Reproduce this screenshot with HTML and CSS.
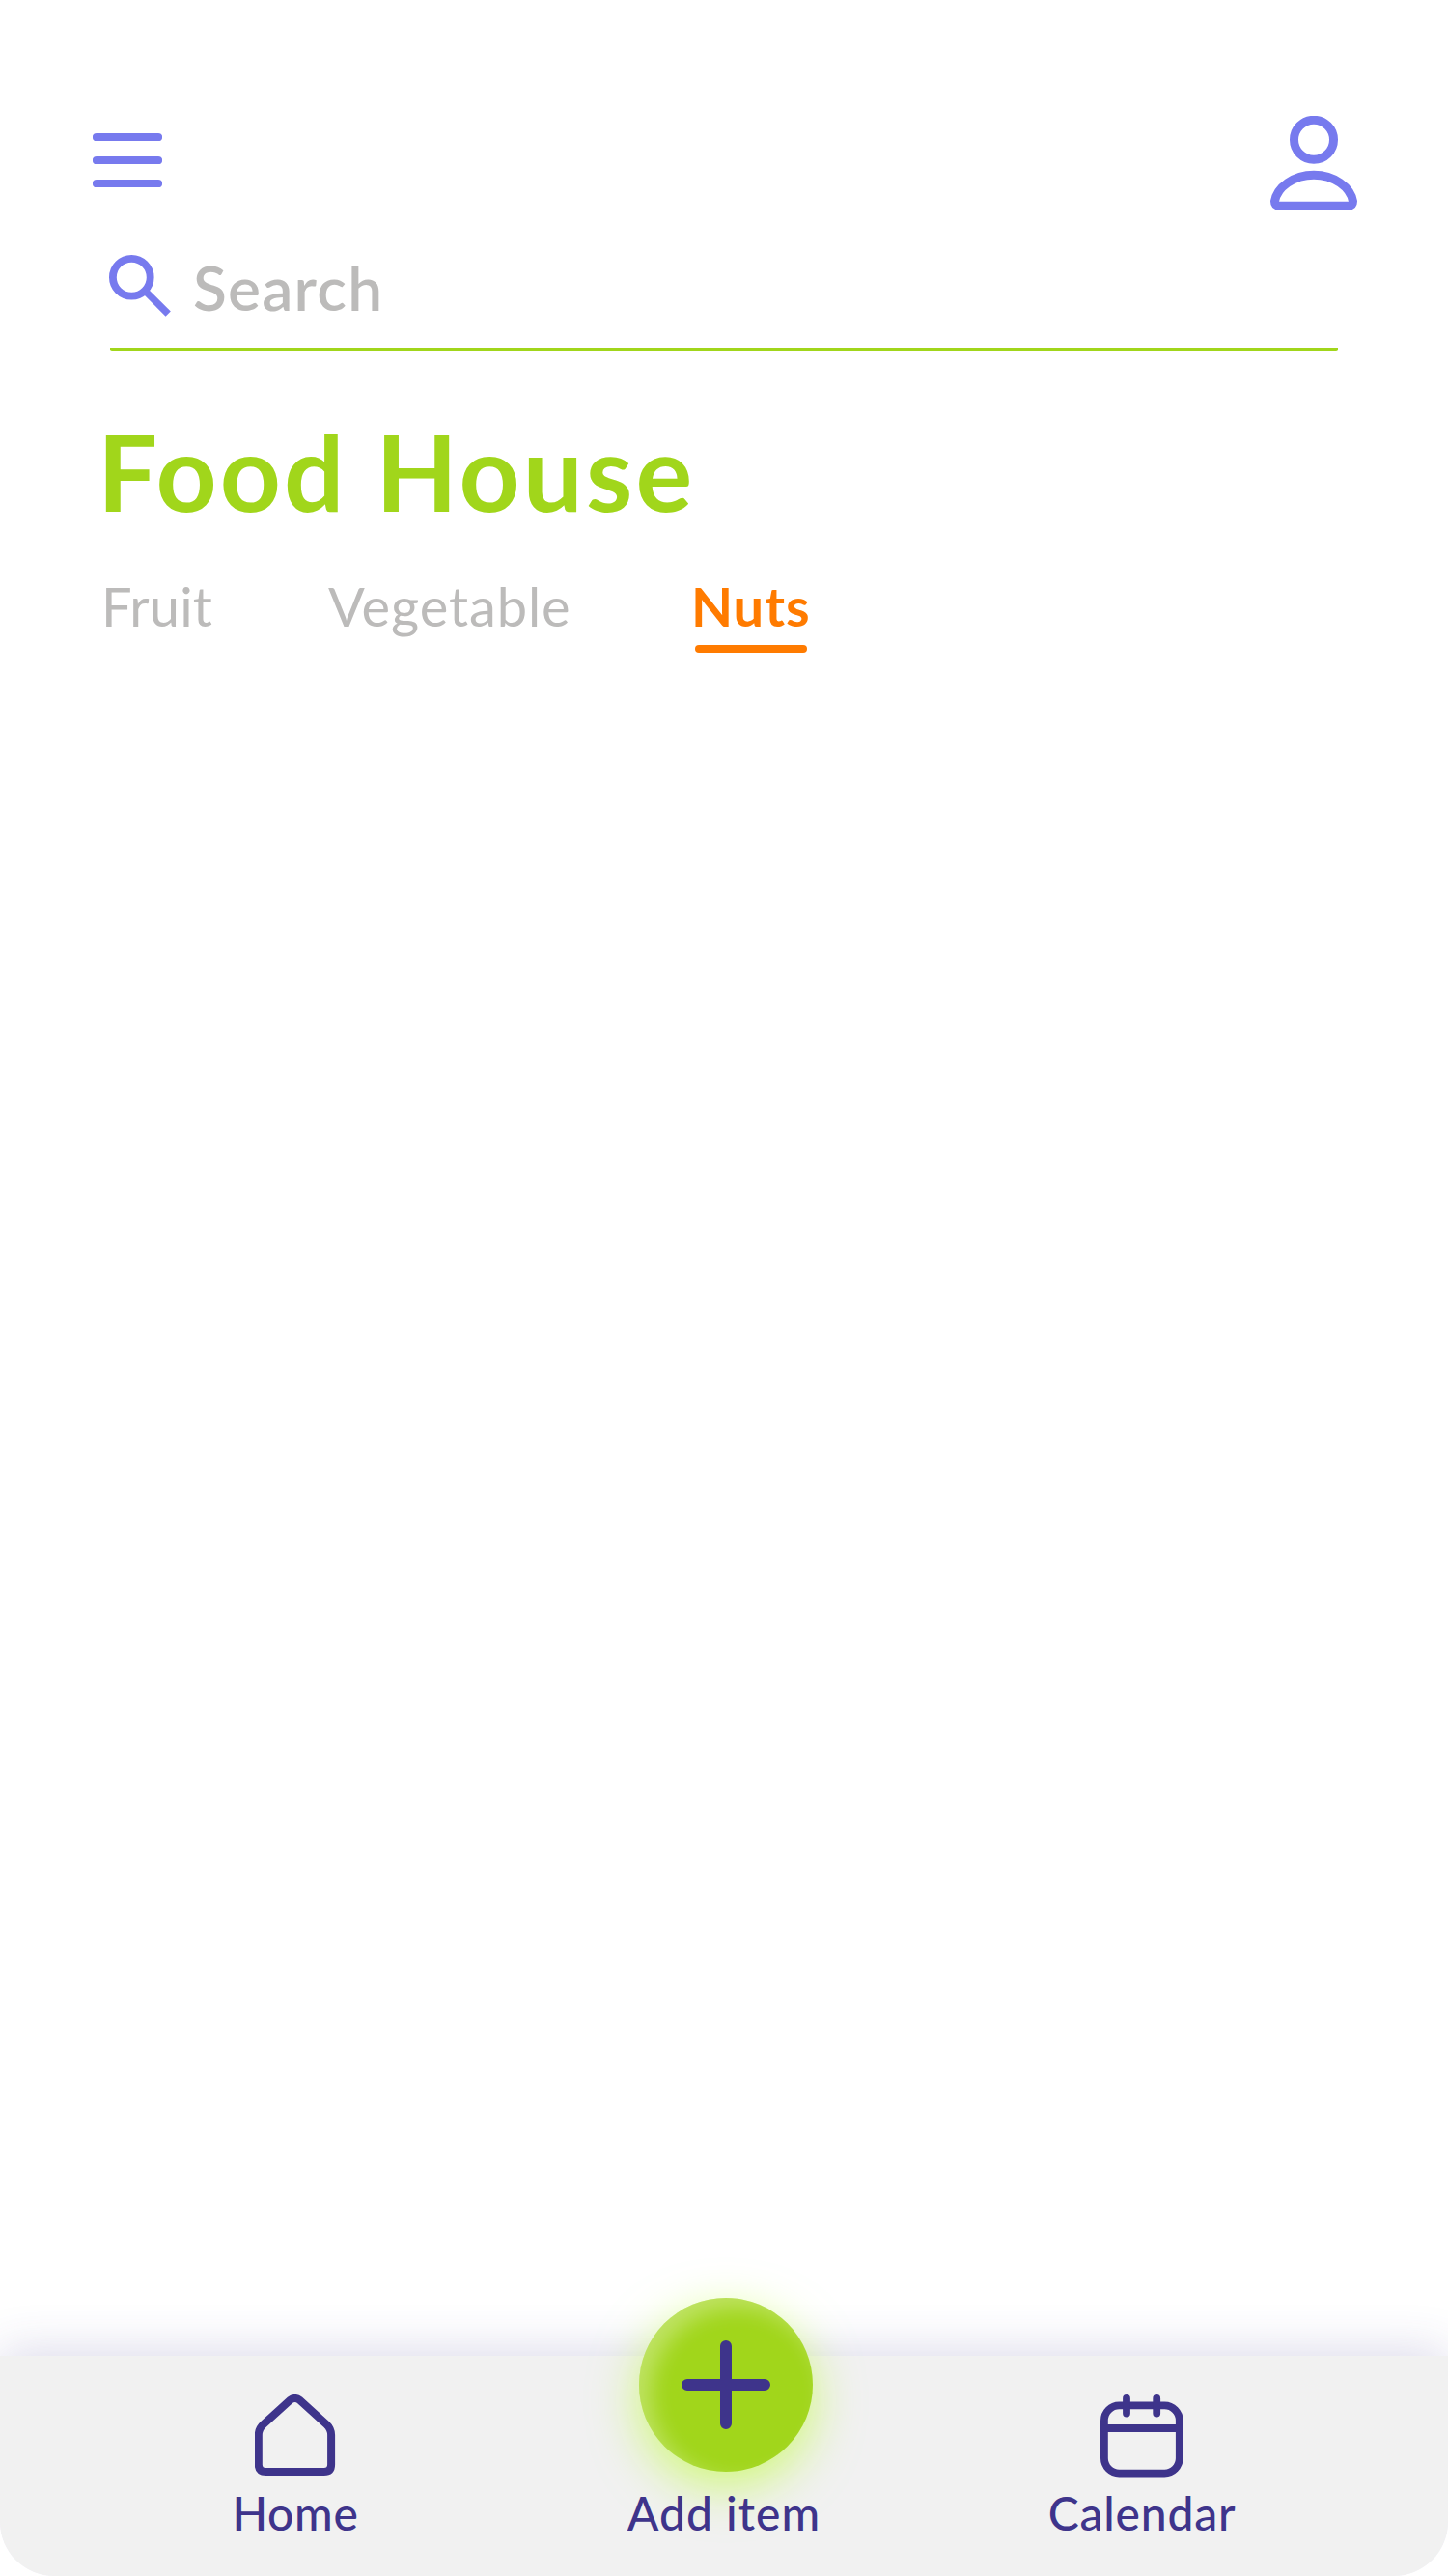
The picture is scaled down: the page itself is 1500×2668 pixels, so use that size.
FILE: index.html
```html
<!DOCTYPE html>
<html lang="en">
<head>
<meta charset="utf-8">
<title>Food House</title>
<link rel="stylesheet" href="styles.css">
</head>
<body>
<div class="screen">
  <header class="topbar">
    <svg class="menu-icon" width="72" height="58" viewBox="0 0 72 58" stroke-width="8.2" stroke-linecap="round">
      <path d="M4 5H68M4 29H68M4 53H68"/>
    </svg>
    <svg class="user-icon" width="90" height="98" viewBox="0 0 90 98" stroke-width="9" stroke-linejoin="round">
      <circle cx="45" cy="24.8" r="20.5"/>
      <path d="M9.5 93.2Q4.5 93 4.5 88.5C7 74 24 61.2 45 61.2S83 74 85.5 88.5Q85.5 93 80.5 93.2Z"/>
    </svg>
  </header>
  <div class="search">
    <svg class="search-icon" width="64" height="64" viewBox="0 0 64 64" stroke-width="7.8">
      <circle cx="23.3" cy="23.3" r="19.4"/>
      <path d="M36.5 36.5L61.2 61.2" stroke-width="7.4"/>
    </svg>
    <span class="search-label">Search</span>
  </div>
  <main class="content">
    <h1 class="title">Food House</h1>
    <nav class="tabs">
      <a class="tab tab-fruit">Fruit</a>
      <a class="tab tab-vegetable">Vegetable</a>
      <a class="tab tab-active">Nuts</a>
    </nav>
  </main>
  <nav class="bottom-nav">
    <a class="nav-item">
      <svg class="nav-icon home-icon" width="84" height="86" viewBox="0 0 84 86" stroke-width="8" stroke-linejoin="round">
        <path d="M3.8 42Q3.8 35.5 8.8 31L36.6 5.8Q41.5 2.2 46.4 5.8L74.2 31Q79.1 35.5 79.1 42V72.5Q79.1 80 71.6 80H11.3Q3.8 80 3.8 72.5Z"/>
      </svg>
      <span class="nav-label home-label">Home</span>
    </a>
    <a class="nav-item nav-add">
      <span class="fab">
        <svg width="92" height="92" viewBox="0 0 92 92" stroke-width="12" stroke-linecap="round">
          <path d="M46 6V86M6 46H86"/>
        </svg>
      </span>
      <span class="nav-label add-label">Add item</span>
    </a>
    <a class="nav-item">
      <svg class="nav-icon" width="86" height="86" viewBox="0 0 86 86" stroke-width="7.8" stroke-linecap="round">
        <rect x="3.9" y="11.4" width="77.9" height="70.2" rx="15.5"/>
        <path d="M4 35H82M27 4V19.5M58.2 4V19.5"/>
      </svg>
      <span class="nav-label calendar-label">Calendar</span>
    </a>
  </nav>
</div>
</body>
</html>
```
FILE: styles.css
```css
* { box-sizing: border-box; }

body {
  margin: 0;
  background: #fff;
  font-family: Lato, "Noto Sans", sans-serif;
}

svg {
  display: block;
  fill: none;
  flex: none;
}

.screen {
  width: 1500px;
  height: 2668px;
  display: flex;
  flex-direction: column;
  overflow: hidden;
}

.topbar {
  display: flex;
  justify-content: space-between;
  align-items: flex-start;
  padding: 120px 94px 0 96px;
}

.menu-icon { margin-top: 17px; }

.menu-icon,
.user-icon,
.search-icon { stroke: #777aee; }

.search {
  display: flex;
  align-items: flex-start;
  height: 146px;
  margin: 0 114px;
  padding-top: 42px;
  background: linear-gradient(#a1d61b, #a1d61b) bottom / 100% 4.5px no-repeat;
  border-radius: 0 0 2px 2px;
}

.search-icon {
  margin-top: 4px;
  margin-left: -1px;
}

.search-label {
  margin-left: 23px;
  font-size: 64px;
  font-weight: 600;
  line-height: 76px;
  letter-spacing: 1.2px;
  color: #bcbbba;
}

.content {
  flex: 1;
  padding: 56px 0 0 105px;
}

.title {
  margin: 0 0 0 -4px;
  font-size: 110px;
  font-weight: 700;
  line-height: 134px;
  letter-spacing: 3.1px;
  color: #a1d61b;
}

.tabs {
  display: grid;
  grid-template-columns: 235px 376px auto;
  justify-content: start;
  margin-top: 40px;
}

.tab {
  display: flex;
  flex-direction: column;
  font-size: 56px;
  line-height: 67px;
  color: #bcbbba;
}

.tab-fruit { letter-spacing: .1px; }
.tab-vegetable { letter-spacing: .9px; }

.tab-active {
  color: #ff7b00;
  font-weight: 700;
  letter-spacing: 1px;
}

.tab-active::after {
  content: "";
  width: 116px;
  height: 8px;
  margin: 7px 0 0 4px;
  border-radius: 4px;
  background: #ff7b00;
}

.bottom-nav {
  display: grid;
  grid-template-columns: 614px 272px 594px;
  height: 228px;
  background: #f1f1f1;
  border-radius: 0 0 56px 56px;
  box-shadow: 0 -5px 50px rgba(62, 52, 139, .18);
  clip-path: inset(-150px 0 0 0 round 0 0 56px 56px);
}

.nav-item {
  display: flex;
  flex-direction: column;
  align-items: center;
  padding-top: 40px;
  color: #3e348b;
}

.nav-item svg { stroke: #3e348b; }

.nav-label {
  margin-top: 8px;
  font-size: 48px;
  font-weight: 500;
  line-height: 58px;
  white-space: nowrap;
}

.home-icon { margin-right: 2px; }
.home-label { margin-right: 2px; letter-spacing: .7px; }
.calendar-label { letter-spacing: .8px; }

.nav-add { padding-top: 0; }

.fab {
  display: flex;
  align-items: center;
  justify-content: center;
  width: 180px;
  height: 180px;
  margin: -60px 0 0 4px;
  border-radius: 50%;
  background: #a1d61b;
  box-shadow:
    0 16px 50px rgba(176, 255, 0, .5),
    inset 12px 10px 22px rgba(255, 255, 255, .32);
}

.add-label {
  margin-top: 14px;
  letter-spacing: 1px;
}
```
